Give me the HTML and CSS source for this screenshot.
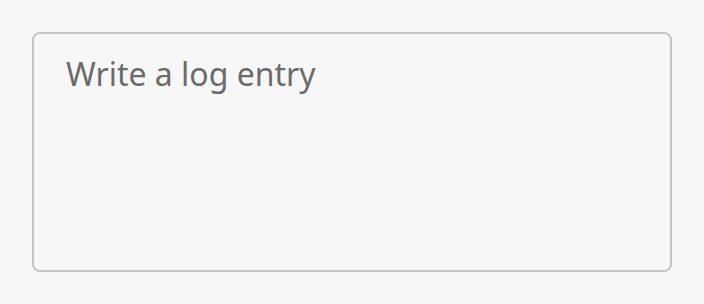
FILE: index.html
```html
<!DOCTYPE html>
<html lang="en">
<head>
  <meta charset="UTF-8">
  <title>Log entry</title>
  <link rel="stylesheet" href="styles.css">
</head>
<body>
  <div class="container">
    <textarea class="log-entry" placeholder="Write a log entry"></textarea>
  </div>
</body>
</html>
```

FILE: styles.css
```css
body {
  margin: 0;
  padding: 0;
  background-color: #f6f6f6;
  font-family: "Noto Sans", sans-serif;
}

.container {
  padding: 32px;
}

.log-entry {
  display: block;
  box-sizing: border-box;
  width: 640px;
  height: 240px;
  margin: 0;
  padding: 18px 32px;
  border: 2px solid #c4c4c4;
  border-radius: 8px;
  background-color: #f7f7f7;
  font-family: "Noto Sans", sans-serif;
  font-size: 32px;
  line-height: 44px;
  color: #333;
  resize: none;
  outline: none;
}

.log-entry::placeholder {
  color: #6b6b6b;
  opacity: 1;
}
```
